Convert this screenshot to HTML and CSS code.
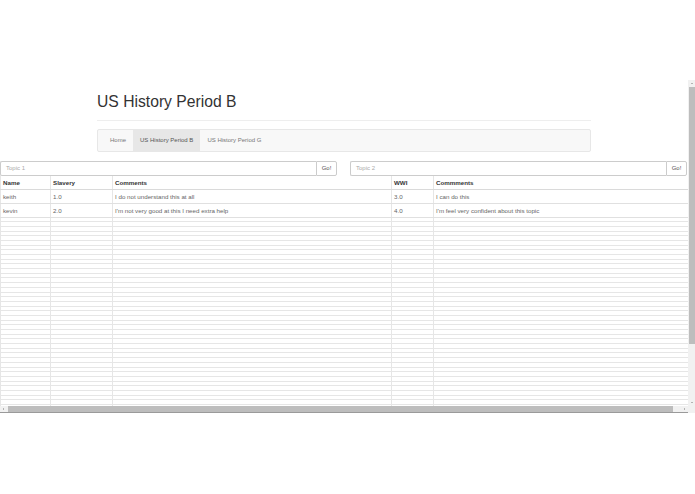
FILE: index.html
```html
<!DOCTYPE html>
<html>
<head>
<meta charset="utf-8">
<title>US History Period B</title>
<link rel="stylesheet" href="styles.css">
</head>
<body>
<div class="frame">
  <div class="main">
    <div class="scroll-area">
      <div class="container">
        <div class="page-header"><h1>US History Period B</h1></div>
        <nav class="navbar">
          <ul class="nav">
            <li><a>Home</a></li>
            <li class="active"><a>US History Period B</a></li>
            <li><a>US History Period G</a></li>
          </ul>
        </nav>
      </div>
      <div class="search-row">
        <div class="input-group">
          <div class="input">Topic 1</div>
          <div class="btn">Go!</div>
        </div>
        <div class="input-group">
          <div class="input">Topic 2</div>
          <div class="btn">Go!</div>
        </div>
      </div>
      <table class="grid">
        <colgroup>
          <col class="c1"><col class="c2"><col class="c3"><col class="c4"><col class="c5">
        </colgroup>
        <thead>
          <tr><th>Name</th><th>Slavery</th><th>Comments</th><th>WWI</th><th>Commments</th></tr>
        </thead>
        <tbody id="rows">
          <tr class="data"><td>keith</td><td>1.0</td><td>I do not understand this at all</td><td>3.0</td><td>I can do this</td></tr>
          <tr class="data"><td>kevin</td><td>2.0</td><td>I'm not very good at this I need extra help</td><td>4.0</td><td>I'm feel very confident about this topic</td></tr>
          <tr class="empty"><td></td><td></td><td></td><td></td><td></td></tr>
          <tr class="empty"><td></td><td></td><td></td><td></td><td></td></tr>
          <tr class="empty"><td></td><td></td><td></td><td></td><td></td></tr>
          <tr class="empty"><td></td><td></td><td></td><td></td><td></td></tr>
          <tr class="empty"><td></td><td></td><td></td><td></td><td></td></tr>
          <tr class="empty"><td></td><td></td><td></td><td></td><td></td></tr>
          <tr class="empty"><td></td><td></td><td></td><td></td><td></td></tr>
          <tr class="empty"><td></td><td></td><td></td><td></td><td></td></tr>
          <tr class="empty"><td></td><td></td><td></td><td></td><td></td></tr>
          <tr class="empty"><td></td><td></td><td></td><td></td><td></td></tr>
          <tr class="empty"><td></td><td></td><td></td><td></td><td></td></tr>
          <tr class="empty"><td></td><td></td><td></td><td></td><td></td></tr>
          <tr class="empty"><td></td><td></td><td></td><td></td><td></td></tr>
          <tr class="empty"><td></td><td></td><td></td><td></td><td></td></tr>
          <tr class="empty"><td></td><td></td><td></td><td></td><td></td></tr>
          <tr class="empty"><td></td><td></td><td></td><td></td><td></td></tr>
          <tr class="empty"><td></td><td></td><td></td><td></td><td></td></tr>
          <tr class="empty"><td></td><td></td><td></td><td></td><td></td></tr>
          <tr class="empty"><td></td><td></td><td></td><td></td><td></td></tr>
          <tr class="empty"><td></td><td></td><td></td><td></td><td></td></tr>
          <tr class="empty"><td></td><td></td><td></td><td></td><td></td></tr>
          <tr class="empty"><td></td><td></td><td></td><td></td><td></td></tr>
          <tr class="empty"><td></td><td></td><td></td><td></td><td></td></tr>
          <tr class="empty"><td></td><td></td><td></td><td></td><td></td></tr>
          <tr class="empty"><td></td><td></td><td></td><td></td><td></td></tr>
          <tr class="empty"><td></td><td></td><td></td><td></td><td></td></tr>
          <tr class="empty"><td></td><td></td><td></td><td></td><td></td></tr>
          <tr class="empty"><td></td><td></td><td></td><td></td><td></td></tr>
          <tr class="empty"><td></td><td></td><td></td><td></td><td></td></tr>
          <tr class="empty"><td></td><td></td><td></td><td></td><td></td></tr>
          <tr class="empty"><td></td><td></td><td></td><td></td><td></td></tr>
          <tr class="empty"><td></td><td></td><td></td><td></td><td></td></tr>
          <tr class="empty"><td></td><td></td><td></td><td></td><td></td></tr>
          <tr class="empty"><td></td><td></td><td></td><td></td><td></td></tr>
          <tr class="empty"><td></td><td></td><td></td><td></td><td></td></tr>
          <tr class="empty"><td></td><td></td><td></td><td></td><td></td></tr>
          <tr class="empty"><td></td><td></td><td></td><td></td><td></td></tr>
          <tr class="empty"><td></td><td></td><td></td><td></td><td></td></tr>
          <tr class="empty"><td></td><td></td><td></td><td></td><td></td></tr>
          <tr class="empty"><td></td><td></td><td></td><td></td><td></td></tr>
          <tr class="empty"><td></td><td></td><td></td><td></td><td></td></tr>
          <tr class="empty"><td></td><td></td><td></td><td></td><td></td></tr>
          <tr class="empty"><td></td><td></td><td></td><td></td><td></td></tr>
          <tr class="empty"><td></td><td></td><td></td><td></td><td></td></tr>
          <tr class="empty"><td></td><td></td><td></td><td></td><td></td></tr>
          <tr class="empty"><td></td><td></td><td></td><td></td><td></td></tr>
        </tbody>
      </table>
    </div>
    <div class="hbar">
      <div class="arrow arrow-left"></div>
      <div class="hthumb"></div>
      <div class="arrow arrow-right"></div>
    </div>
  </div>
  <div class="vbar">
    <div class="arrow arrow-up"></div>
    <div class="vthumb"></div>
    <div class="vspace"></div>
    <div class="arrow arrow-down"></div>
    <div class="corner"></div>
  </div>
</div>
</body>
</html>
```

FILE: styles.css
```css
html, body {
  margin: 0;
  padding: 0;
  background: #fff;
  font-family: "Liberation Sans", Arial, Helvetica, sans-serif;
  color: #333;
}

.frame {
  margin-top: 80px;
  height: 333px;
  display: flex;
}

.main {
  flex: 1;
  min-width: 0;
  display: flex;
  flex-direction: column;
}

.scroll-area {
  flex: 1;
  overflow: hidden;
}

.container {
  width: 494px;
  margin-left: 97px;
  padding-top: 13px;
}

.page-header {
  padding-bottom: 9.5px;
  border-bottom: 1px solid #eee;
}

.page-header h1 {
  margin: 0;
  font-size: 15.7px;
  line-height: 17px;
  font-weight: 400;
  color: #333;
}

.navbar {
  margin-top: 8px;
  height: 21px;
  background: #f8f8f8;
  border: 1px solid #e7e7e7;
  border-radius: 2px;
}

.nav {
  list-style: none;
  margin: 0 0 0 5px;
  padding: 0;
  display: flex;
  height: 21px;
}

.nav li a {
  display: block;
  padding: 0 7px;
  line-height: 21px;
  font-size: 6px;
  color: #777;
}

.nav li.active a {
  background: #e7e7e7;
  color: #555;
}

.search-row {
  margin-top: 9px;
  display: flex;
  gap: 13px;
  width: 688px;
}

.input-group {
  width: 337px;
  display: flex;
  height: 15px;
}

.input {
  flex: 1;
  border: 1px solid #ccc;
  border-right: none;
  border-radius: 2px 0 0 2px;
  font-size: 6px;
  line-height: 13px;
  color: #aaa;
  padding-left: 5px;
}

.btn {
  width: 19px;
  border: 1px solid #ccc;
  border-radius: 0 2px 2px 0;
  font-size: 6px;
  line-height: 13px;
  color: #555;
  text-align: center;
  background: #fff;
}

.grid {
  width: 688px;
  border-collapse: collapse;
  table-layout: fixed;
  font-size: 6.2px;
}

.c1 { width: 50px; }
.c2 { width: 62px; }
.c3 { width: 279px; }
.c4 { width: 42px; }
.c5 { width: 255px; }

.grid th,
.grid td {
  border: 1px solid #e6e6e6;
  padding: 0 2px;
  text-align: left;
}

.grid th {
  height: 13px;
  line-height: 13px;
  font-weight: 700;
  color: #333;
  border-bottom: 1px solid #dadada;
  border-top: none;
}

.grid tr.data td {
  height: 13px;
  line-height: 13px;
  color: #666;
  border-top: 1px solid #e0e0e0;
  border-bottom: 1px solid #e0e0e0;
}

.grid tr.empty td {
  height: 3.7px;
  padding: 0;
  line-height: 0;
  border-top: 1px solid #eeeeee;
}

.hbar {
  height: 6px;
  display: flex;
  align-items: stretch;
  background: #f1f1f1;
  border-bottom: 1px solid #9a9a9a;
}

.hthumb {
  margin-left: 1px;
  width: 665px;
  background: #bdbdbd;
}

.vbar {
  width: 7px;
  display: flex;
  flex-direction: column;
  background: #f1f1f1;
}

.vthumb {
  margin: 0 0.5px;
  height: 257px;
  background: #bdbdbd;
}

.vspace {
  flex: 1;
}

.corner {
  height: 7px;
  background: #f1f1f1;
}

.arrow {
  width: 7px;
  height: 7px;
  flex: none;
  display: flex;
  align-items: center;
  justify-content: center;
}

.arrow::before {
  content: "";
  width: 0;
  height: 0;
  border: 1.5px solid transparent;
}

.arrow-up::before { border-bottom-color: #777; border-top-width: 0; }
.arrow-down::before { border-top-color: #777; border-bottom-width: 0; }
.arrow-left::before { border-right-color: #777; border-left-width: 0; }
.arrow-right { margin-left: auto; }
.arrow-right::before { border-left-color: #777; border-right-width: 0; }
.hbar .arrow { height: 6px; }
```
